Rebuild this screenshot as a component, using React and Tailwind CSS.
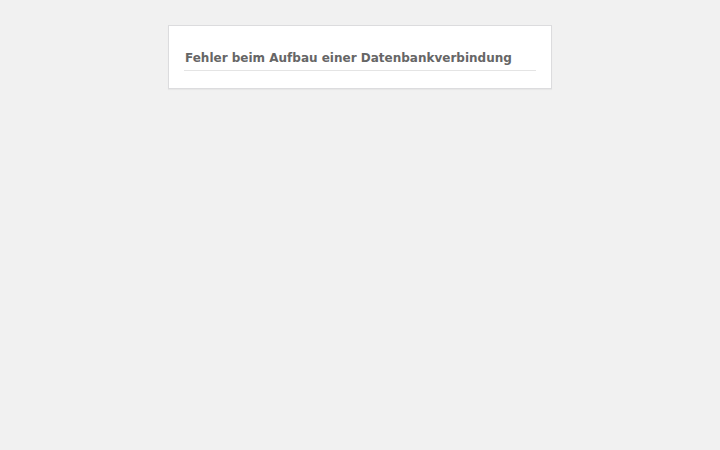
export default function App() {
  return (
    <div className="min-h-screen w-full bg-[#f1f1f1] pt-[25px] font-['DejaVu_Sans',sans-serif]">
      <div className="mx-auto w-[384px] border border-[#dcdcde] bg-white px-[15px] pt-[23px] pb-[17px] shadow-[0_1px_1px_rgba(0,0,0,0.04)]">
        <h1 className="border-b border-[#e4e4e4] pb-[3px] indent-px text-[12px] leading-[18px] font-bold whitespace-nowrap text-[#666]">
          Fehler beim Aufbau einer Datenbankverbindung
        </h1>
      </div>
    </div>
  );
}
